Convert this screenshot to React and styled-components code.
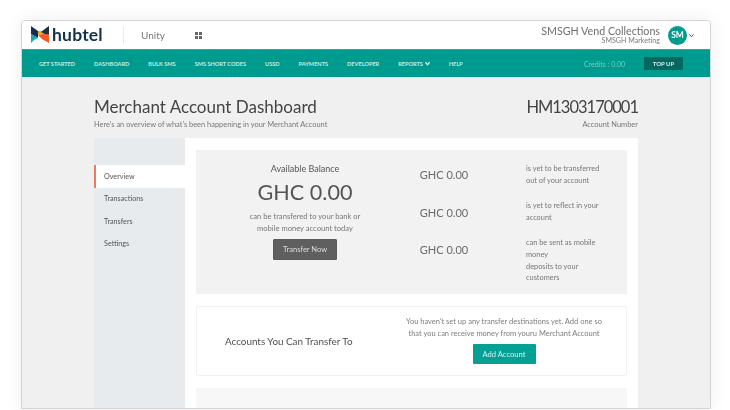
import React from "react";
import styled, { createGlobalStyle } from "styled-components";

const Global = createGlobalStyle`
  html, body { margin: 0; padding: 0; background: #fff; width: 730px; height: 410px; overflow: hidden; }
  body { font-family: "Lato", "Open Sans", sans-serif; }
  * { box-sizing: border-box; }
`;
const Stage = styled.div`
  width: 730px; height: 410px; padding: 20px 19px 1px 21px; overflow: hidden;
`;
const Browser = styled.div`
  width: 690px; height: 389px; border: 1px solid #d4d4d4; border-radius: 4px 4px 0 0;
  overflow: hidden; background: #f0f0f0; box-shadow: 0 0 18px rgba(0,0,0,.07);
  display: flex; flex-direction: column; filter: blur(.3px);
`;
const Header = styled.header`
  height: 28px; background: #fff; display: flex; align-items: center; padding: 0 16px 0 9px; flex: none;
`;
const Brand = styled.div`display: flex; align-items: center; gap: 3px; width: 92px; margin-top: -1px;`;
const BrandName = styled.span`
  font: 700 17.5px "Lato", sans-serif; color: #15304f; letter-spacing: .2px; margin-top: -1px;
`;
const Divider = styled.div`width: 1px; height: 18px; background: #eaeaea;`;
const Product = styled.span`font-size: 10px; color: #777; margin-left: 17px; width: 54px;`;
const Spacer = styled.div`flex: 1;`;
const Org = styled.div`display: flex; flex-direction: column; align-items: flex-end; margin-right: 8px; margin-top: -2px;`;
const OrgName = styled.span`font-size: 10.7px; line-height: 13px; color: #6f6f6f;`;
const OrgSub = styled.span`font-size: 7.1px; line-height: 8px; color: #7c7c7c;`;
const Avatar = styled.div`
  width: 19px; height: 19px; border-radius: 50%; background: #009b8d; color: #fff; margin-right: 2px;
  font: 700 8.5px "Lato", sans-serif; display: flex; align-items: center; justify-content: center;
`;
const Nav = styled.nav`
  height: 28px; background: #009b8f; border-top: 1px solid #2fa99f; display: flex; align-items: center;
  padding: 0 27px 0 17px; flex: none;
`;
const NavItem = styled.a`
  font-size: 5.6px; font-weight: 700; color: #c5ebe6; margin-right: 19px; white-space: nowrap;
  display: inline-flex; align-items: center; gap: 2px;
`;
const Credits = styled.span`font-size: 7px; color: #74cdc3; margin-right: 19px;`;
const TopUp = styled.button`
  width: 39px; height: 13px; padding: 0; border: 0; border-radius: 1px; background: #04685f; color: #d5eeeb;
  font: 700 6px "Lato", sans-serif;
`;
const Page = styled.main`flex: 1; padding: 20px 72px 0 72px; min-height: 0;`;
const TitleRow = styled.div`display: flex; justify-content: space-between; height: 41px;`;
const TitleBlock = styled.div`display: flex; flex-direction: column;`;
const TitleRight = styled(TitleBlock)`align-items: flex-end;`;
const Title = styled.h1`margin: 0; font-size: 17px; line-height: 20px; font-weight: 400; color: #444;`;
const AccountId = styled(Title)`font-size: 16.5px; letter-spacing: -1px;`;
const Subtitle = styled.p`margin: 2px 0 0; font-size: 7.45px; line-height: 11px; color: #777;`;
const Card = styled.section`background: #fff; display: flex; height: 272px;`;
const Side = styled.aside`
  width: 91px; background: #e8ebee; padding-top: 27px; display: flex; flex-direction: column; flex: none;
`;
const SideItem = styled.div`
  height: 22.5px; padding-left: ${p => p.$active ? "8px" : "10px"}; display: flex; align-items: center;
  font-size: 7.2px; color: #555; background: ${p => p.$active ? "#fff" : "transparent"};
  border-left: ${p => p.$active ? "2px solid #f0795a" : "0"};
`;
const Content = styled.div`flex: 1; padding: 12px 11px 0; display: flex; flex-direction: column; gap: 12px;`;
const Balance = styled.div`
  height: 144px; flex: none; background: #f2f2f2; display: grid; grid-template-columns: 218px 60px 1fr; padding-top: 13px;
`;
const Main = styled.div`display: flex; flex-direction: column; align-items: center; text-align: center;`;
const Label = styled.div`font-size: 9px; line-height: 12px; color: #555;`;
const Big = styled.div`font-size: 21.6px; line-height: 30px; margin-top: 2px; color: #555;`;
const Note = styled.div`font-size: 7.6px; line-height: 12px; color: #777; margin-top: 3px;`;
const DarkBtn = styled.button`
  width: 64px; height: 21px; margin-top: 5px; border: 1px solid #5a5a5a; border-radius: 1px; background: #5f5f5f; color: #ddd;
  font: 400 7.5px "Lato", sans-serif; padding: 0;
`;
const Amounts = styled.div`display: flex; flex-direction: column; align-items: center; padding-top: 3px; gap: 20.5px;`;
const Amount = styled.div`font-size: 11px; line-height: 17px; color: #6a6a6a;`;
const Notes = styled.div`display: flex; flex-direction: column; gap: 14px; padding-left: 52px;`;
const SmallNote = styled.div`font-size: 7.4px; line-height: 11.6px; color: #777;`;
const Accounts = styled.div`
  height: 70px; flex: none; border: 1px solid #f1f1f1; border-radius: 2px; display: grid; grid-template-columns: 185px 1fr; align-items: center;
`;
const AccTitle = styled.div`font-size: 9.9px; color: #4f4f4f; padding-left: 28px; white-space: nowrap;`;
const AccRight = styled.div`display: flex; flex-direction: column; align-items: center; padding-bottom: 2px;`;
const AccNote = styled.div`font-size: 7.5px; line-height: 11.6px; color: #7d7d7d; text-align: center; white-space: nowrap;`;
const AddBtn = styled.button`
  width: 63px; height: 20px; margin-top: 5px; border: 0; border-radius: 1px; background: #05a094; color: #d8f1ee;
  font: 400 7.6px "Lato", sans-serif; padding: 0;
`;
const Faint = styled.div`height: 40px; flex: none; background: #f7f7f7;`;

const Logo = () => (
  <svg width="18" height="17" viewBox="0 0 18 17">
    <path d="M0 0 L7 5 L7 12 L0 8Z" fill="#14304f" />
    <path d="M0 8 L7 12 L3 14 L0 17Z" fill="#1aa6b0" />
    <path d="M18 0 L11 5 L7 5 L7 9 L12 8 L18 8Z" fill="#f7a823" />
    <path d="M18 0 L10 6 L14 8 L18 8Z" fill="#14304f" />
    <path d="M7 9 L12 8 L18 8 L18 17 L11 13Z" fill="#ef5a28" />
  </svg>
);
const Grid = () => (
  <svg width="7" height="7" viewBox="0 0 7 7" fill="#666">
    <rect width="3" height="3" /><rect x="4" width="3" height="3" />
    <rect y="4" width="3" height="3" /><rect x="4" y="4" width="3" height="3" />
  </svg>
);
const Chevron = ({ color, w = 1, size = 5 }) => (
  <svg width={size} height={size} viewBox="0 0 6 6" fill="none" stroke={color} strokeWidth={w}>
    <path d="M0.5 1.5 L3 4.5 L5.5 1.5" />
  </svg>
);

export default function App() {
  const nav = ["GET STARTED", "DASHBOARD", "BULK SMS", "SMS SHORT CODES", "USSD", "PAYMENTS", "DEVELOPER"];
  return (
    <Stage>
      <Global />
      <Browser>
        <Header>
          <Brand><Logo /><BrandName>hubtel</BrandName></Brand>
          <Divider />
          <Product>Unity</Product>
          <Grid />
          <Spacer />
          <Org>
            <OrgName>SMSGH Vend Collections</OrgName>
            <OrgSub>SMSGH Marketing</OrgSub>
          </Org>
          <Avatar>SM</Avatar>
          <Chevron color="#555" w={1.2} />
        </Header>
        <Nav>
          {nav.map(n => <NavItem key={n}>{n}</NavItem>)}
          <NavItem>REPORTS <Chevron color="#d5f0ec" w={1.6} /></NavItem>
          <NavItem>HELP</NavItem>
          <Spacer />
          <Credits>Credits : 0.00</Credits>
          <TopUp>TOP UP</TopUp>
        </Nav>
        <Page>
          <TitleRow>
            <TitleBlock>
              <Title>Merchant Account Dashboard</Title>
              <Subtitle>Here's an overview of what's been happening in your Merchant Account</Subtitle>
            </TitleBlock>
            <TitleRight>
              <AccountId>HM1303170001</AccountId>
              <Subtitle>Account Number</Subtitle>
            </TitleRight>
          </TitleRow>
          <Card>
            <Side>
              <SideItem $active>Overview</SideItem>
              <SideItem>Transactions</SideItem>
              <SideItem>Transfers</SideItem>
              <SideItem>Settings</SideItem>
            </Side>
            <Content>
              <Balance>
                <Main>
                  <Label>Available Balance</Label>
                  <Big>GHC 0.00</Big>
                  <Note>can be transfered to your bank or<br />mobile money account today</Note>
                  <DarkBtn>Transfer Now</DarkBtn>
                </Main>
                <Amounts>
                  <Amount>GHC 0.00</Amount>
                  <Amount>GHC 0.00</Amount>
                  <Amount>GHC 0.00</Amount>
                </Amounts>
                <Notes>
                  <SmallNote>is yet to be transferred<br />out of your account</SmallNote>
                  <SmallNote>is yet to reflect in your<br />account</SmallNote>
                  <SmallNote>can be sent as mobile<br />money<br />deposits to your<br />customers</SmallNote>
                </Notes>
              </Balance>
              <Accounts>
                <AccTitle>Accounts You Can Transfer To</AccTitle>
                <AccRight>
                  <AccNote>You haven't set up any transfer destinations yet. Add one so<br />that you can receive money from youru Merchant Account</AccNote>
                  <AddBtn>Add Account</AddBtn>
                </AccRight>
              </Accounts>
              <Faint />
            </Content>
          </Card>
        </Page>
      </Browser>
    </Stage>
  );
}
